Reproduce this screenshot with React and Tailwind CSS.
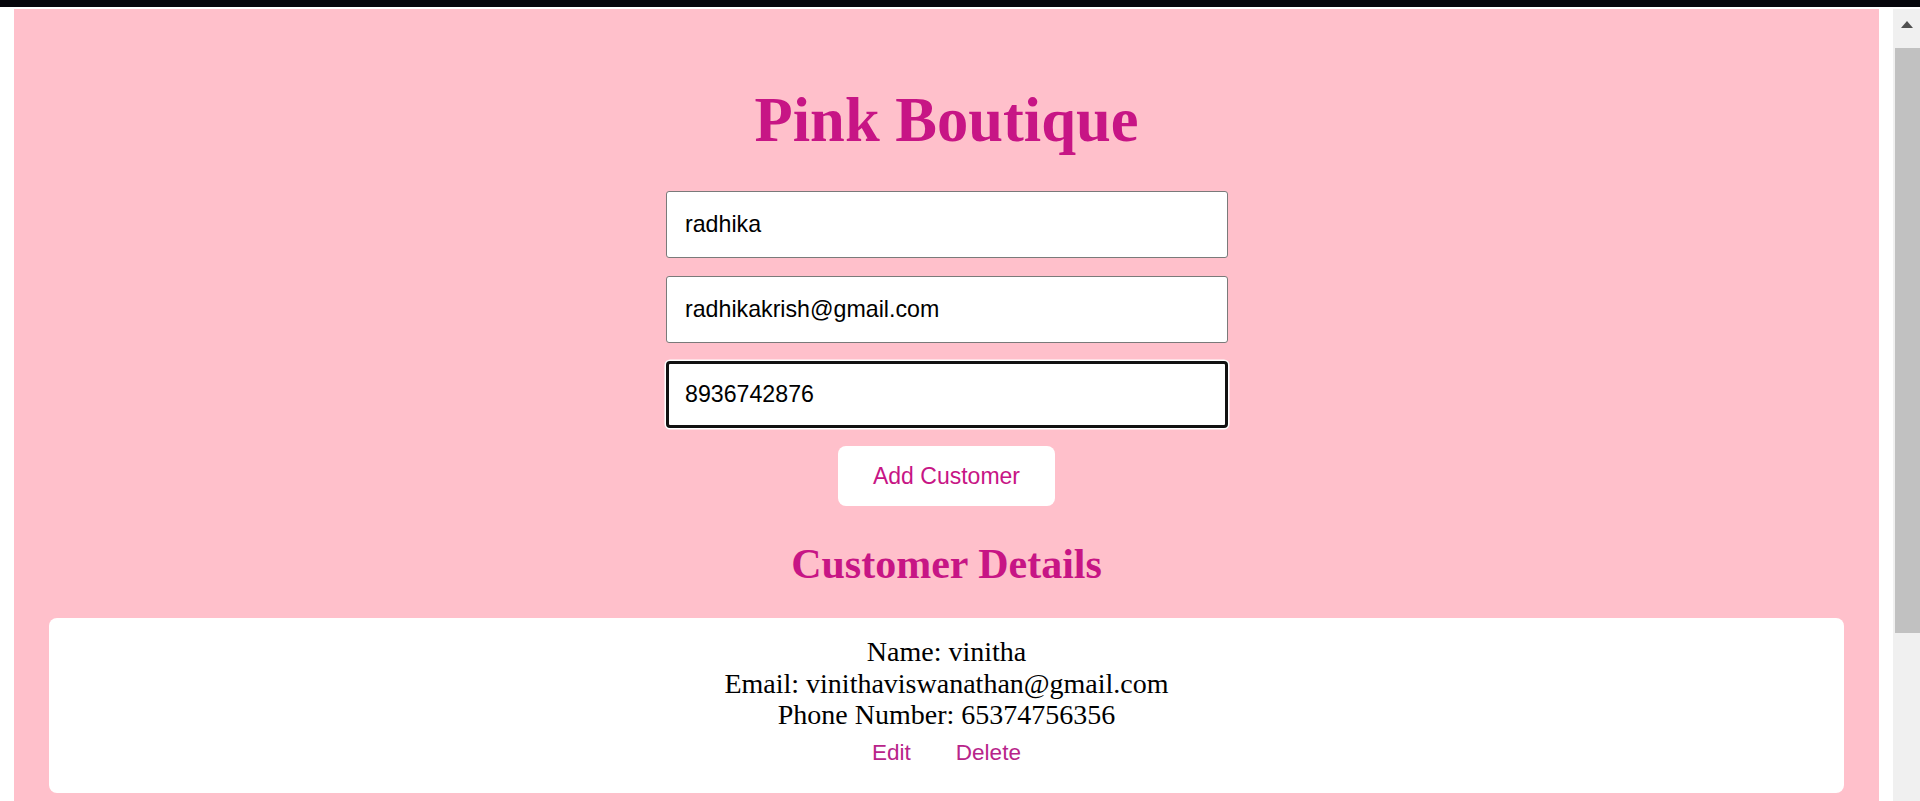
const customers = [
  {
    name: "vinitha",
    email: "vinithaviswanathan@gmail.com",
    phone: "65374756356"
  }
]

const fields = [
  { value: "radhika", focused: false },
  { value: "radhikakrish@gmail.com", focused: false },
  { value: "8936742876", focused: true }
]

function Scrollbar() {
  return (
    <div className="w-[27px] bg-[#f0f0f0] flex flex-col">
      {/* up arrow */}
      <div className="h-[39px] pt-[12px] pl-[1px] flex justify-center">
        <span className="w-0 h-0 border-x-[6.5px] border-x-transparent border-b-[7px] border-b-[#505050]"></span>
      </div>
      {/* thumb */}
      <div className="ml-[2px] h-[585px] bg-[#c1c1c1]"></div>
    </div>
  )
}

export default function App() {
  return (
    <div className="h-[801px] overflow-hidden bg-white flex flex-col">
      <div className="h-[7px] bg-[#05060b]"></div>
      <div className="h-[2px] bg-white"></div>

      <div className="flex flex-1 min-h-0">
        <div className="w-[14px] bg-white"></div>

        <main className="flex-1 bg-[#ffc0cb] flex flex-col items-center pt-[76px]">
          <h1 className="text-[62.5px] leading-[71px] font-bold text-[#c71585] font-['Liberation_Serif','Times_New_Roman',serif]">
            Pink Boutique
          </h1>

          {/* Form */}
          <div className="mt-[35px] w-[562px] flex flex-col gap-[18px]">
            {fields.map((f, i) => (
              <input
                key={i}
                type="text"
                defaultValue={f.value}
                className={
                  f.focused
                    ? "h-[67px] w-full bg-white rounded-[4px] border-[3px] border-[#111] shadow-[0_0_0_1.5px_#fff] pl-[16.5px] text-[23.2px] text-black outline-none font-['Liberation_Sans',Arial,sans-serif]"
                    : "h-[67px] w-full bg-white rounded-[3px] border border-[#7a7a7a] pl-[18.5px] text-[23.2px] text-black outline-none font-['Liberation_Sans',Arial,sans-serif]"
                }
              />
            ))}
          </div>

          <button className="mt-[18px] h-[60px] w-[217px] bg-white rounded-[8px] text-[23px] text-[#c71585] font-['Liberation_Sans',Arial,sans-serif]">
            Add Customer
          </button>

          <h2 className="mt-[35px] text-[42px] leading-[47px] font-bold text-[#c71585] font-['Liberation_Serif','Times_New_Roman',serif]">
            Customer Details
          </h2>

          {/* Customer cards */}
          <div className="mt-[30px] self-stretch mx-[35px] flex flex-col gap-[18px]">
            {customers.map((c, i) => (
              <div
                key={i}
                className="bg-white rounded-[8px] pt-[18px] pb-[18px] flex flex-col items-center text-black font-['Liberation_Serif','Times_New_Roman',serif]"
              >
                <p className="text-[28px] leading-[31.7px]">Name: {c.name}</p>
                <p className="text-[28px] leading-[31.7px]">Email: {c.email}</p>
                <p className="text-[28px] leading-[31.7px]">Phone Number: {c.phone}</p>

                <div className="flex gap-[21px] font-['Liberation_Sans',Arial,sans-serif]">
                  <button className="px-[12px] py-[9px] text-[22.5px] leading-[26px] text-[#b8248a]">
                    Edit
                  </button>
                  <button className="px-[12px] py-[9px] text-[22.5px] leading-[26px] text-[#b8248a]">
                    Delete
                  </button>
                </div>
              </div>
            ))}
          </div>
        </main>

        <div className="w-[14px] bg-white"></div>
        <Scrollbar />
      </div>
    </div>
  )
}
